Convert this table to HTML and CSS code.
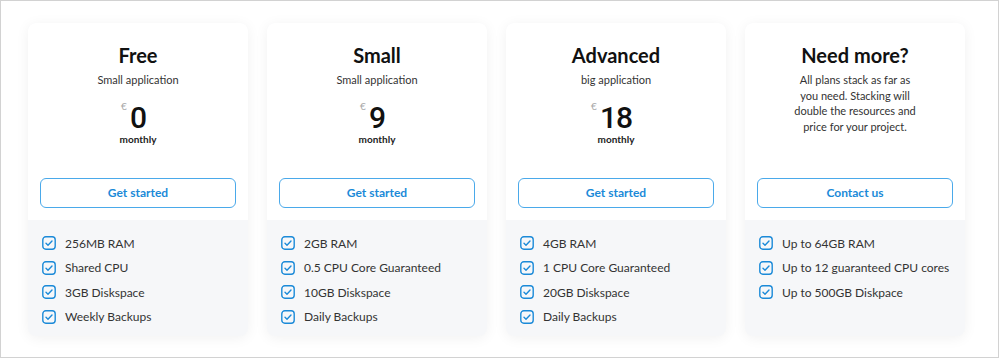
FILE: index.html
```html
<!DOCTYPE html>
<html lang="en">
<head>
    <meta charset="UTF-8">
    <title>Pricing</title>
    <link rel="stylesheet" href="styles.css">
</head>
<body>
    <div class="frame">
        <div class="plans">
            <div class="card">
                <div class="top">
                    <h2>Free</h2>
                    <p class="sub">Small application</p>
                    <div class="price"><span class="cur">€</span><span class="num">0</span></div>
                    <div class="per">monthly</div>
                    <a class="btn" href="#">Get started</a>
                </div>
                <ul class="features">
                    <li><svg viewBox="0 0 14 14"><rect x="0.8" y="0.8" width="12.4" height="12.4" rx="3"/><path d="M4 7.2l2 2 4-4.2"/></svg>256MB RAM</li>
                    <li><svg viewBox="0 0 14 14"><rect x="0.8" y="0.8" width="12.4" height="12.4" rx="3"/><path d="M4 7.2l2 2 4-4.2"/></svg>Shared CPU</li>
                    <li><svg viewBox="0 0 14 14"><rect x="0.8" y="0.8" width="12.4" height="12.4" rx="3"/><path d="M4 7.2l2 2 4-4.2"/></svg>3GB Diskspace</li>
                    <li><svg viewBox="0 0 14 14"><rect x="0.8" y="0.8" width="12.4" height="12.4" rx="3"/><path d="M4 7.2l2 2 4-4.2"/></svg>Weekly Backups</li>
                </ul>
            </div>
            <div class="card">
                <div class="top">
                    <h2>Small</h2>
                    <p class="sub">Small application</p>
                    <div class="price"><span class="cur">€</span><span class="num">9</span></div>
                    <div class="per">monthly</div>
                    <a class="btn" href="#">Get started</a>
                </div>
                <ul class="features">
                    <li><svg viewBox="0 0 14 14"><rect x="0.8" y="0.8" width="12.4" height="12.4" rx="3"/><path d="M4 7.2l2 2 4-4.2"/></svg>2GB RAM</li>
                    <li><svg viewBox="0 0 14 14"><rect x="0.8" y="0.8" width="12.4" height="12.4" rx="3"/><path d="M4 7.2l2 2 4-4.2"/></svg>0.5 CPU Core Guaranteed</li>
                    <li><svg viewBox="0 0 14 14"><rect x="0.8" y="0.8" width="12.4" height="12.4" rx="3"/><path d="M4 7.2l2 2 4-4.2"/></svg>10GB Diskspace</li>
                    <li><svg viewBox="0 0 14 14"><rect x="0.8" y="0.8" width="12.4" height="12.4" rx="3"/><path d="M4 7.2l2 2 4-4.2"/></svg>Daily Backups</li>
                </ul>
            </div>
            <div class="card">
                <div class="top">
                    <h2>Advanced</h2>
                    <p class="sub">big application</p>
                    <div class="price"><span class="cur">€</span><span class="num">18</span></div>
                    <div class="per">monthly</div>
                    <a class="btn" href="#">Get started</a>
                </div>
                <ul class="features">
                    <li><svg viewBox="0 0 14 14"><rect x="0.8" y="0.8" width="12.4" height="12.4" rx="3"/><path d="M4 7.2l2 2 4-4.2"/></svg>4GB RAM</li>
                    <li><svg viewBox="0 0 14 14"><rect x="0.8" y="0.8" width="12.4" height="12.4" rx="3"/><path d="M4 7.2l2 2 4-4.2"/></svg>1 CPU Core Guaranteed</li>
                    <li><svg viewBox="0 0 14 14"><rect x="0.8" y="0.8" width="12.4" height="12.4" rx="3"/><path d="M4 7.2l2 2 4-4.2"/></svg>20GB Diskspace</li>
                    <li><svg viewBox="0 0 14 14"><rect x="0.8" y="0.8" width="12.4" height="12.4" rx="3"/><path d="M4 7.2l2 2 4-4.2"/></svg>Daily Backups</li>
                </ul>
            </div>
            <div class="card">
                <div class="top">
                    <h2>Need more?</h2>
                    <p class="desc">All plans stack as far as<br>you need. Stacking will<br>double the resources and<br>price for your project.</p>
                    <a class="btn" href="#">Contact us</a>
                </div>
                <ul class="features">
                    <li><svg viewBox="0 0 14 14"><rect x="0.8" y="0.8" width="12.4" height="12.4" rx="3"/><path d="M4 7.2l2 2 4-4.2"/></svg>Up to 64GB RAM</li>
                    <li><svg viewBox="0 0 14 14"><rect x="0.8" y="0.8" width="12.4" height="12.4" rx="3"/><path d="M4 7.2l2 2 4-4.2"/></svg>Up to 12 guaranteed CPU cores</li>
                    <li><svg viewBox="0 0 14 14"><rect x="0.8" y="0.8" width="12.4" height="12.4" rx="3"/><path d="M4 7.2l2 2 4-4.2"/></svg>Up to 500GB Diskpace</li>
                </ul>
            </div>
        </div>
    </div>
</body>
</html>
```

FILE: styles.css
```css
body {
    margin: 0;
    font-family: Lato, "Noto Sans", sans-serif;
    background: #fff;
    color: #222;
}
.frame {
    box-sizing: border-box;
    width: 999px;
    height: 358px;
    border: 1px solid #d2d2d2;
    padding: 22px 0 0 27px;
}
.plans {
    display: flex;
    gap: 19px;
}
.card {
    width: 220px;
    height: 313px;
    border-radius: 8px;
    background: #f6f7f9;
    box-shadow: 0 2px 14px rgba(0, 0, 0, 0.06);
    overflow: hidden;
    display: flex;
    flex-direction: column;
}
.top {
    background: #fff;
    height: 197px;
    box-sizing: border-box;
    padding: 20px 12px 12px;
    display: flex;
    flex-direction: column;
    align-items: center;
    text-align: center;
}
h2 {
    margin: 0;
    font-size: 20px;
    line-height: 24px;
    font-weight: 700;
    color: #111;
}
.sub {
    margin: 5px 0 0;
    font-size: 11px;
    line-height: 15px;
    color: #333;
}
.desc {
    margin: 5px 0 0;
    font-size: 11px;
    line-height: 15.5px;
    color: #333;
}
.price {
    position: relative;
    margin-top: 16px;
    height: 30px;
}
.num {
    font-family: Roboto, sans-serif;
    font-size: 30px;
    line-height: 30px;
    font-weight: 500;
    color: #111;
    letter-spacing: -1px;
}
.cur {
    position: absolute;
    left: -9px;
    top: -2px;
    font-size: 10px;
    line-height: 10px;
    color: #aaa;
}
.per {
    font-size: 10px;
    line-height: 13px;
    font-weight: 700;
    color: #222;
}
.btn {
    margin-top: auto;
    box-sizing: border-box;
    width: 196px;
    height: 30px;
    border: 1px solid #4aa9ea;
    border-radius: 6px;
    color: #1b8ad8;
    font-size: 12px;
    font-weight: 700;
    line-height: 28px;
    text-decoration: none;
}
.features {
    list-style: none;
    margin: 0;
    padding: 11px 14px 0;
}
.features li {
    display: flex;
    align-items: center;
    gap: 9px;
    height: 24.5px;
    font-size: 12px;
    color: #333;
}
.features svg {
    width: 14px;
    height: 14px;
    flex: none;
    fill: none;
    stroke: #1b8ad8;
    stroke-width: 1.4;
    stroke-linecap: round;
    stroke-linejoin: round;
}
```
